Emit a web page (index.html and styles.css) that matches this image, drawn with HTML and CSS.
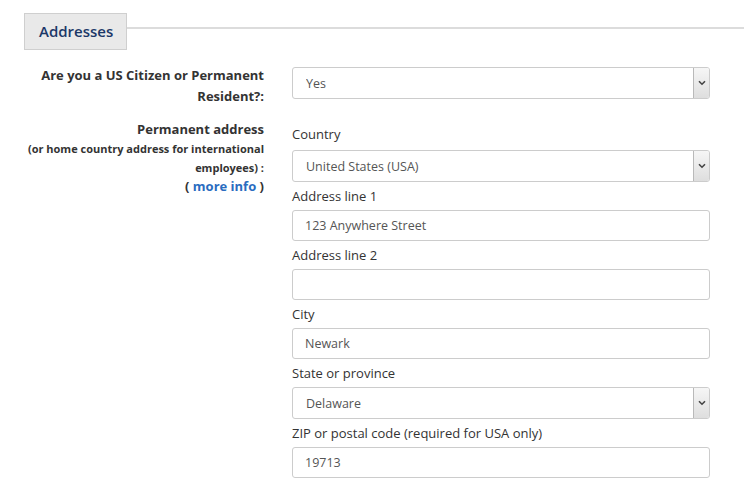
FILE: index.html
```html
<!DOCTYPE html>
<html lang="en">
<head>
<meta charset="utf-8">
<title>Addresses</title>
<link rel="stylesheet" href="styles.css">
</head>
<body>
<section class="panel">
  <header class="panel-head">
    <h2 class="tab">Addresses</h2>
    <div class="rule"></div>
  </header>

  <div class="form-row row-citizen">
    <div class="row-label">Are you a US Citizen or Permanent Resident?:</div>
    <div class="row-fields">
      <div class="select-wrap">
        <select class="control select"><option>Yes</option></select>
        <span class="select-btn"><svg width="8" height="6" viewBox="0 0 8 6"><path d="M1 1.2 L4 4.2 L7 1.2" fill="none" stroke="#444" stroke-width="1.6"/></svg></span>
      </div>
    </div>
  </div>

  <div class="form-row row-address">
    <div class="row-label address-label">
      <div class="lbl-main">Permanent address</div>
      <div class="lbl-note">(or home country address for international employees) :</div>
      <div class="lbl-main">( <a href="#" class="more">more info</a> )</div>
    </div>
    <div class="row-fields">
      <label class="field-label">Country</label>
      <div class="select-wrap">
        <select class="control select"><option>United States (USA)</option></select>
        <span class="select-btn"><svg width="8" height="6" viewBox="0 0 8 6"><path d="M1 1.2 L4 4.2 L7 1.2" fill="none" stroke="#444" stroke-width="1.6"/></svg></span>
      </div>
      <label class="field-label">Address line 1</label>
      <input class="control" type="text" value="123 Anywhere Street">
      <label class="field-label">Address line 2</label>
      <input class="control" type="text" value="">
      <label class="field-label">City</label>
      <input class="control" type="text" value="Newark">
      <label class="field-label">State or province</label>
      <div class="select-wrap">
        <select class="control select"><option>Delaware</option></select>
        <span class="select-btn"><svg width="8" height="6" viewBox="0 0 8 6"><path d="M1 1.2 L4 4.2 L7 1.2" fill="none" stroke="#444" stroke-width="1.6"/></svg></span>
      </div>
      <label class="field-label">ZIP or postal code (required for USA only)</label>
      <input class="control" type="text" value="19713">
    </div>
  </div>
</section>
</body>
</html>
```
FILE: styles.css
```css
html, body {
  margin: 0;
  padding: 0;
  background: #fff;
}

body {
  font-family: "Open Sans", "Noto Sans", sans-serif;
  color: #333;
}

.panel {
  padding-top: 13px;
}

.panel-head {
  display: flex;
  align-items: flex-start;
  padding-left: 24px;
}

.tab {
  margin: 0;
  box-sizing: border-box;
  width: 103px;
  height: 37px;
  background: #e9e9e9;
  border: 1px solid #cfcfcf;
  color: #1c3868;
  font-size: 15px;
  font-weight: 600;
  line-height: 35px;
  padding-left: 14px;
}

.rule {
  flex: 1;
  height: 2px;
  margin-top: 14px;
  background: #dcdcdc;
}

.form-row {
  display: grid;
  grid-template-columns: 264px 418px;
  column-gap: 28px;
}

.row-citizen {
  margin-top: 17px;
}

.row-address {
  margin-top: 15px;
}

.row-label {
  text-align: right;
  font-size: 13px;
  font-weight: 700;
  line-height: 21px;
  color: #333;
  margin-top: -2px;
}

.row-citizen .row-label {
  padding-left: 40px;
}

.address-label {
  line-height: 19px;
  margin-top: -2px;
}

.lbl-note {
  font-size: 11px;
  padding-left: 20px;
}

.more {
  color: #2a6cc0;
  text-decoration: none;
}

.row-fields {
  display: flex;
  flex-direction: column;
}

.field-label {
  font-size: 13px;
  line-height: 20px;
  margin: 4px 0;
  color: #333;
}

.row-address .field-label:first-child {
  margin-top: 2px;
  margin-bottom: 6px;
}

.control {
  box-sizing: border-box;
  width: 418px;
  height: 31px;
  border: 1px solid #ccc;
  border-radius: 3px;
  background: #fff;
  font-family: "Open Sans", "Noto Sans", sans-serif;
  font-size: 12.5px;
  color: #555;
  padding: 0 12px;
  margin: 0;
  outline: none;
}

.select-wrap {
  position: relative;
  width: 418px;
}

.select {
  -webkit-appearance: none;
  appearance: none;
  height: 32px;
  padding-left: 13px;
}

.select-btn {
  position: absolute;
  top: 1px;
  right: 1px;
  bottom: 1px;
  width: 15px;
  border-left: 1px solid #b9b9b9;
  border-radius: 0 2px 2px 0;
  background: linear-gradient(#f6f6f6, #dedede);
  display: flex;
  align-items: center;
  justify-content: center;
}
```
